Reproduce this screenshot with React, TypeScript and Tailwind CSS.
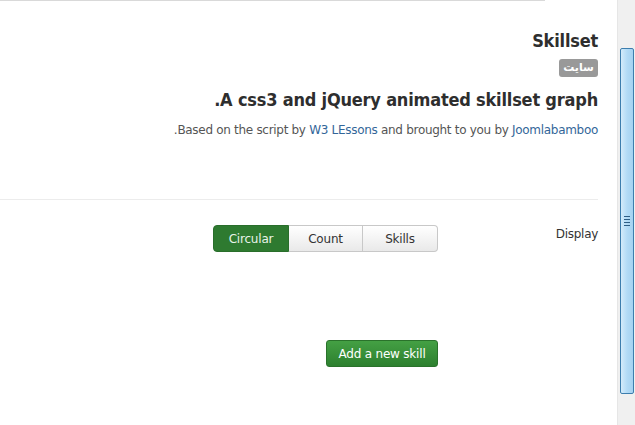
import React from "react";

export default function App() {
  return (
    <div className="flex w-[635px] h-[425px] bg-white overflow-hidden font-['DejaVu_Sans',sans-serif] text-[#333]">
      <div className="flex-1 flex flex-col">
        <div className="flex h-px">
          <div className="w-[545px] h-px bg-[#d9d9d9]" />
        </div>
        <div dir="rtl" className="flex flex-col pr-[19px]">
          <h1 className="mt-[28px] text-[18px] leading-[24px] font-bold tracking-[-0.2px] text-[#2e2e2e] font-['DejaVu_Sans_Condensed',sans-serif]">Skillset</h1>
          <div className="mt-[6px] flex">
            <span className="h-[18px] w-[39px] rounded-[3px] bg-[#999] text-white text-[11px] font-bold leading-[18px] text-center">سایت</span>
          </div>
          <h2 className="mt-[11px] text-[18px] leading-[24px] font-bold tracking-[-0.2px] text-[#2e2e2e] font-['DejaVu_Sans_Condensed',sans-serif]">A css3 and jQuery animated skillset graph.</h2>
          <p className="mt-[9px] text-[12px] leading-[18px] tracking-[-0.3px] text-[#555]">
            Based on the script by <span className="text-[#336699]">W3 LEssons</span> and brought to you by <span className="text-[#336699]">Joomlabamboo</span>.
          </p>
        </div>
        <div className="mt-[60px] w-[598px] h-px bg-[#ececec]" />
        <div dir="rtl" className="flex pr-[19px] mt-[25px]">
          <div className="w-[160px] text-[12px] leading-[18px] tracking-[-0.3px] text-[#333]">Display</div>
          <div className="flex flex-col">
            <div dir="ltr" className="flex h-[27px] text-[12px] tracking-[-0.2px] self-end">
              <div className="w-[76px] flex items-center justify-center rounded-l-[4px] bg-[#2e7a30] text-[#e8f3e8] border border-[#296e2b]">Circular</div>
              <div className="w-[74px] flex items-center justify-center bg-gradient-to-b from-white to-[#e9e9e9] border-y border-r border-[#c8c8c8] text-[#333]">Count</div>
              <div className="w-[75px] flex items-center justify-center rounded-r-[4px] bg-gradient-to-b from-white to-[#e9e9e9] border-y border-r border-[#c8c8c8] text-[#333]">Skills</div>
            </div>
            <div className="mt-[88px] flex">
              <div className="w-[112px] h-[27px] flex items-center justify-center rounded-[3px] bg-gradient-to-b from-[#44a044] to-[#2d802f] border border-[#2a722b] text-white text-[12px] tracking-[-0.2px]">Add a new skill</div>
            </div>
          </div>
        </div>
      </div>
      <div className="w-[18px] h-full bg-[#f0f0f0] border-l border-[#e6e6e6] flex flex-col items-center">
        <div className="mt-[48px] w-[14px] h-[346px] rounded-[2px] border border-[#3d7eae] bg-gradient-to-r from-[#d4ecfb] via-[#b3dbf6] to-[#a4d2f1] flex items-center justify-center">
          <div className="flex flex-col gap-[2px]">
            <div className="w-[6px] h-px bg-[#2f5f86]" />
            <div className="w-[6px] h-px bg-[#2f5f86]" />
            <div className="w-[6px] h-px bg-[#2f5f86]" />
            <div className="w-[6px] h-px bg-[#2f5f86]" />
          </div>
        </div>
      </div>
    </div>
  );
}
